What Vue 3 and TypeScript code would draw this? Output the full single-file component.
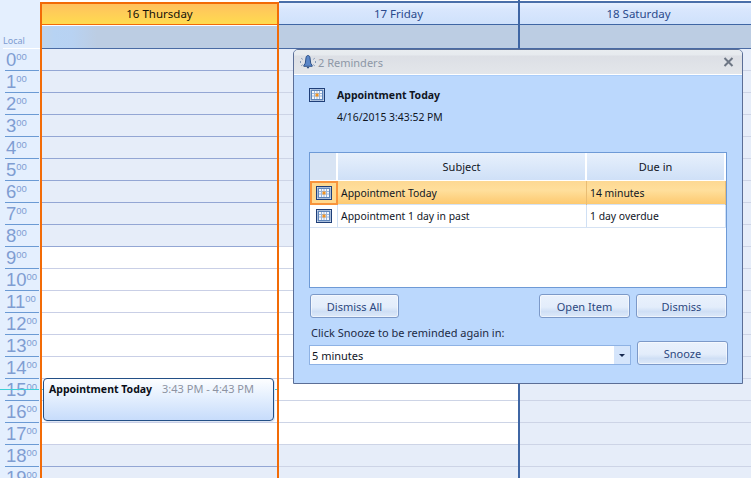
<template>
  <div class="cal">
    <aside class="cal__ruler">
      <div class="cal__local">Local</div>
      <div v-for="h in hours" :key="h" class="cal__hour">
        <span class="cal__big">{{ h }}</span><span class="cal__min">00</span>
      </div>
    </aside>

    <section
      v-for="d in days"
      :key="d.label"
      class="day"
      :class="[{ 'day--sel': d.selected, 'day--next': d.afterSelected }]"
    >
      <div class="day__head">{{ d.label }}</div>
      <div class="day__allday"></div>
      <div
        v-for="h in hours"
        :key="h"
        class="day__cell"
        :class="{ 'day__cell--work': !d.weekend && h >= 9 && h < 18 }"
      ></div>
    </section>

    <div class="cal__now cal__now--ruler"></div>
    <div class="cal__now cal__now--day"></div>

    <div class="appt">
      <b>Appointment Today</b>
      <span class="appt__time">3:43 PM - 4:43 PM</span>
    </div>

    <div class="rem">
      <header class="rem__bar">
        <svg class="rem__bell" width="18" height="16" viewBox="0 0 18 16">
          <path d="M9 1.5c1.2 0 1.8.9 2 2.2l.7 5.5 1.5 2.3v.8H4.8v-.8l1.5-2.3.7-5.5c.2-1.3.8-2.2 2-2.2z" fill="#5a86c8" stroke="#24477f" stroke-width=".9" />
          <path d="M7.6 13h2.8l-1.4 1.8z" fill="#24477f" />
          <path d="M2.6 4.5l1 .8M1 8h1.4M2.6 11.5l1-.8M15.4 4.5l-1 .8M17 8h-1.4M15.4 11.5l-1-.8" stroke="#2b4f86" stroke-width="1" stroke-dasharray="1 .6" />
        </svg>
        <span class="rem__title">2 Reminders</span>
        <svg class="rem__close" width="11" height="10" viewBox="0 0 11 10">
          <path d="M1.5 1l8 8M9.5 1l-8 8" stroke="#6d7684" stroke-width="2" />
        </svg>
      </header>

      <div class="rem__body">
        <div class="rem__info">
          <svg class="ico" width="16" height="16" viewBox="0 0 16 16">
            <use href="#cal-ico" />
          </svg>
          <div>
            <div class="rem__subject">Appointment Today</div>
            <div class="rem__when">4/16/2015 3:43:52 PM</div>
          </div>
        </div>

        <div class="grid">
          <div class="grid__row grid__row--head">
            <div class="grid__ind"></div>
            <div class="grid__c">Subject</div>
            <div class="grid__c">Due in</div>
          </div>
          <div
            v-for="(r, i) in reminders"
            :key="r.subject"
            class="grid__row"
            :class="{ 'grid__row--sel': i === 0 }"
          >
            <div class="grid__ind">
              <svg width="16" height="16" viewBox="0 0 16 16"><use href="#cal-ico" /></svg>
            </div>
            <div class="grid__c">{{ r.subject }}</div>
            <div class="grid__c">{{ r.due }}</div>
          </div>
        </div>

        <div class="rem__actions">
          <button type="button" class="btn">Dismiss All</button>
          <span class="rem__spacer"></span>
          <button type="button" class="btn">Open Item</button>
          <button type="button" class="btn">Dismiss</button>
        </div>

        <div class="rem__label">Click Snooze to be reminded again in:</div>
        <div class="rem__snooze">
          <div class="combo">
            <span class="combo__val">5 minutes</span>
            <span class="combo__arrow"></span>
          </div>
          <button type="button" class="btn">Snooze</button>
        </div>
      </div>
    </div>

    <svg width="0" height="0" class="defs">
      <defs>
        <g id="cal-ico">
          <rect x="0.5" y="1.5" width="15" height="13" fill="#f4f7fc" stroke="#1f3f78" />
          <rect x="1.5" y="2.5" width="13" height="11" fill="#5f86bb" />
          <rect x="3" y="4" width="10" height="8" fill="#f6f8fc" />
          <path d="M5.5 4v8M8 4v8M10.5 4v8M3 6.5h10M3 9h10" stroke="#9db7da" stroke-width="1" />
          <rect x="6.5" y="6.5" width="3" height="3" fill="#f39321" />
        </g>
      </defs>
    </svg>
  </div>
</template>

<script setup lang="ts">
interface Day {
  label: string
  selected?: boolean
  afterSelected?: boolean
  weekend?: boolean
}

const hours = Array.from({ length: 20 }, (_, i) => i)

const days: Day[] = [
  { label: '16 Thursday', selected: true },
  { label: '17 Friday', afterSelected: true },
  { label: '18 Saturday', weekend: true },
]

const reminders = [
  { subject: 'Appointment Today', due: '14 minutes' },
  { subject: 'Appointment 1 day in past', due: '1 day overdue' },
]
</script>

<style>
html,
body {
  margin: 0;
  background: #fff;
}
</style>

<style scoped>
.cal {
  position: relative;
  width: 751px;
  height: 478px;
  overflow: hidden;
  display: grid;
  grid-template-columns: 40px 239px 239px 239px;
  font-family: 'Noto Sans', 'Open Sans', sans-serif;
  font-size: 11px;
  color: #10151f;
  background: #fff;
}
.defs {
  position: absolute;
}

.cal__ruler {
  background: #e4effe;
  padding-left: 5px;
}
.cal__local {
  height: 49px;
  box-sizing: border-box;
  margin-left: -2px;
  padding-top: 33px;
  font-size: 9px;
  line-height: 16px;
  color: #7c9bd0;
  border-bottom: 1px solid #fff;
}
.cal__hour {
  height: 22px;
  box-sizing: border-box;
  border-bottom: 1px solid #6b9ad4;
  margin-right: 1px;
  display: flex;
  color: #7f9dd2;
  font-family: 'Liberation Sans', sans-serif;
  line-height: 21px;
  white-space: nowrap;
}
.cal__big {
  font-size: 18.5px;
  padding-left: 1px;
}
.cal__min {
  font-size: 9.5px;
  line-height: 15px;
}

.day {
  border-left: 2px solid #3f66a4;
  box-sizing: border-box;
  min-width: 0;
}
.day--next {
  border-left: 0;
}
.day--sel {
  margin-top: 2px;
  border: 0;
  border-left: 2px solid #f26b07;
  border-right: 2px solid #f26b07;
  border-top: 2px solid #f26b07;
}
.day__head {
  height: 24px;
  margin-top: 1px;
  box-sizing: border-box;
  border-top: 2px solid #4a6fa9;
  border-bottom: 1px solid #3f66a4;
  background: linear-gradient(#e6f0ff, #d9e7fd 30%, #cfe1fb);
  color: #2a4a8c;
  font-size: 11.5px;
  line-height: 21px;
  text-align: center;
}
.day--sel .day__head {
  height: 22px;
  margin-top: 0;
  border-top: 0;
  border-bottom: 1px solid #fff;
  box-shadow: inset 0 -1px 0 #f26b07;
  background: linear-gradient(#ffc15f, #ffcf57 50%, #ffdc4e);
  color: #161208;
  line-height: 19px;
}
.day__allday {
  height: 24px;
  box-sizing: border-box;
  background: #bccde3;
  border-bottom: 1px solid #4a6ba4;
}
.day--sel .day__allday {
  height: 23px;
  background: linear-gradient(90deg, #bfd3ea, #b7d3f3 12px, #b8d2f2 30px, #bccde3 55px);
}
.day__cell {
  height: 22px;
  box-sizing: border-box;
  background: #e6edf9;
  border-bottom: 1px solid #cdd4e6;
}
.day__cell--work {
  background: #fff;
}
.day--sel .day__cell {
  border-bottom-color: #93a6d4;
}
.day--sel .day__cell--work {
  border-bottom-color: #c9cfe6;
}

.cal__now {
  position: absolute;
  top: 389px;
  height: 1px;
  background: #3fd0d8;
}
.cal__now--ruler {
  left: 0;
  width: 39px;
}
.cal__now--day {
  left: 42px;
  width: 235px;
}

.appt {
  position: absolute;
  left: 43px;
  top: 378px;
  width: 231px;
  height: 43px;
  box-sizing: border-box;
  border: 1px solid #234f86;
  border-radius: 4px;
  padding: 2px 5px;
  background: linear-gradient(#fdfeff, #e4effe 45%, #c7dcfb);
  box-shadow: 1px 1px 0 #dfe6f4;
  line-height: 15px;
  white-space: nowrap;
}
.appt b {
  color: #0a0e17;
  font-size: 10.5px;
}
.appt__time {
  margin-left: 10px;
  color: #8d93a2;
}

.rem {
  position: absolute;
  left: 293px;
  top: 49px;
  width: 450px;
  height: 335px;
  box-sizing: border-box;
  border: 1px solid #5b6e96;
  border-radius: 5px 5px 0 0;
  background: #bbd8fd;
  display: flex;
  flex-direction: column;
}
.rem__bar {
  height: 25px;
  flex: none;
  box-sizing: border-box;
  display: flex;
  align-items: center;
  padding: 0 8px 0 5px;
  gap: 1px;
  background: linear-gradient(#e9edf0, #e6eaee 5px, #dcdfe5 6px, #e3e6ea);
  border-bottom: 1px solid #fff;
  border-radius: 4px 4px 0 0;
}
.rem__title {
  flex: 1;
  color: #8d97a6;
}
.rem__body {
  flex: 1;
  padding: 0 15px;
  border-top: 1px solid #a9cdfa;
}
.rem__info {
  display: flex;
  gap: 12px;
  padding: 10px 0 0;
  height: 76px;
  box-sizing: border-box;
}
.ico {
  flex: none;
  margin-top: 1px;
}
.rem__subject {
  font-weight: 700;
  font-size: 10.5px;
  line-height: 18px;
}
.rem__when {
  margin-top: 4px;
  font-size: 10.4px;
  line-height: 18px;
}

.grid {
  height: 136px;
  box-sizing: border-box;
  border: 1px solid #6e9ad6;
  background: #fff;
}
.grid__row {
  display: grid;
  grid-template-columns: 28px 249px 1fr;
  height: 23px;
  box-sizing: border-box;
  border-bottom: 1px solid #d5e2f3;
  font-size: 10.4px;
  line-height: 22px;
}
.grid__row--head {
  height: 28px;
  border-bottom: 1px solid #fff;
  background: linear-gradient(#e7f0fc, #cfe0f7);
  text-align: center;
  font-size: 11px;
  line-height: 27px;
}
.grid__row--sel {
  height: 24px;
  background: linear-gradient(#fdd892, #ffdf9c 40%, #fdc96f);
  line-height: 24px;
}
.grid__ind {
  display: flex;
  align-items: center;
  justify-content: center;
  box-sizing: border-box;
  border-right: 1px solid #d0e0f4;
  background: #fff;
}
.grid__row--head .grid__ind {
  background: #d8e4f4;
  border-right: 2px solid #fff;
}
.grid__row--sel .grid__ind {
  border: 2px solid #f8943c;
  background: #ffd98f;
}
.grid__c {
  padding: 0 3px;
  white-space: nowrap;
  border-right: 1px solid #d0e0f4;
}
.grid__row--head .grid__c {
  border-right: 2px solid #fff;
}
.grid__row--sel .grid__c {
  border-right-color: #e9bd74;
}

.rem__actions {
  display: flex;
  gap: 6px;
  margin-top: 6px;
  padding-left: 1px;
}
.rem__spacer {
  flex: 1;
}
.btn {
  width: 91px;
  height: 24px;
  box-sizing: border-box;
  padding: 0;
  border: 1px solid #7c99c8;
  border-radius: 3px;
  background: linear-gradient(#eaf1fc, #e3edfb 55%, #cfdff5 75%, #dde9f9);
  box-shadow: inset 0 0 0 1px rgba(255, 255, 255, 0.5);
  color: #2c4880;
  font-family: inherit;
  font-size: 11px;
}
.rem__actions .btn:first-child {
  width: 89px;
}
.rem__label {
  margin-top: 7px;
  padding-left: 2px;
  line-height: 16px;
  color: #1c2a44;
}
.rem__snooze {
  display: flex;
  align-items: flex-end;
  justify-content: space-between;
  width: 419px;
}
.combo {
  width: 322px;
  height: 20px;
  box-sizing: border-box;
  border: 1px solid #8eb2e4;
  background: #fff;
  display: flex;
  justify-content: space-between;
  line-height: 19px;
  padding-left: 2px;
}
.combo__arrow {
  width: 16px;
  background: #d5e5fb;
  position: relative;
}
.combo__arrow::after {
  content: '';
  position: absolute;
  left: 5px;
  top: 8px;
  border: 3px solid transparent;
  border-top: 3px solid #16294f;
  border-bottom: 0;
}
</style>
